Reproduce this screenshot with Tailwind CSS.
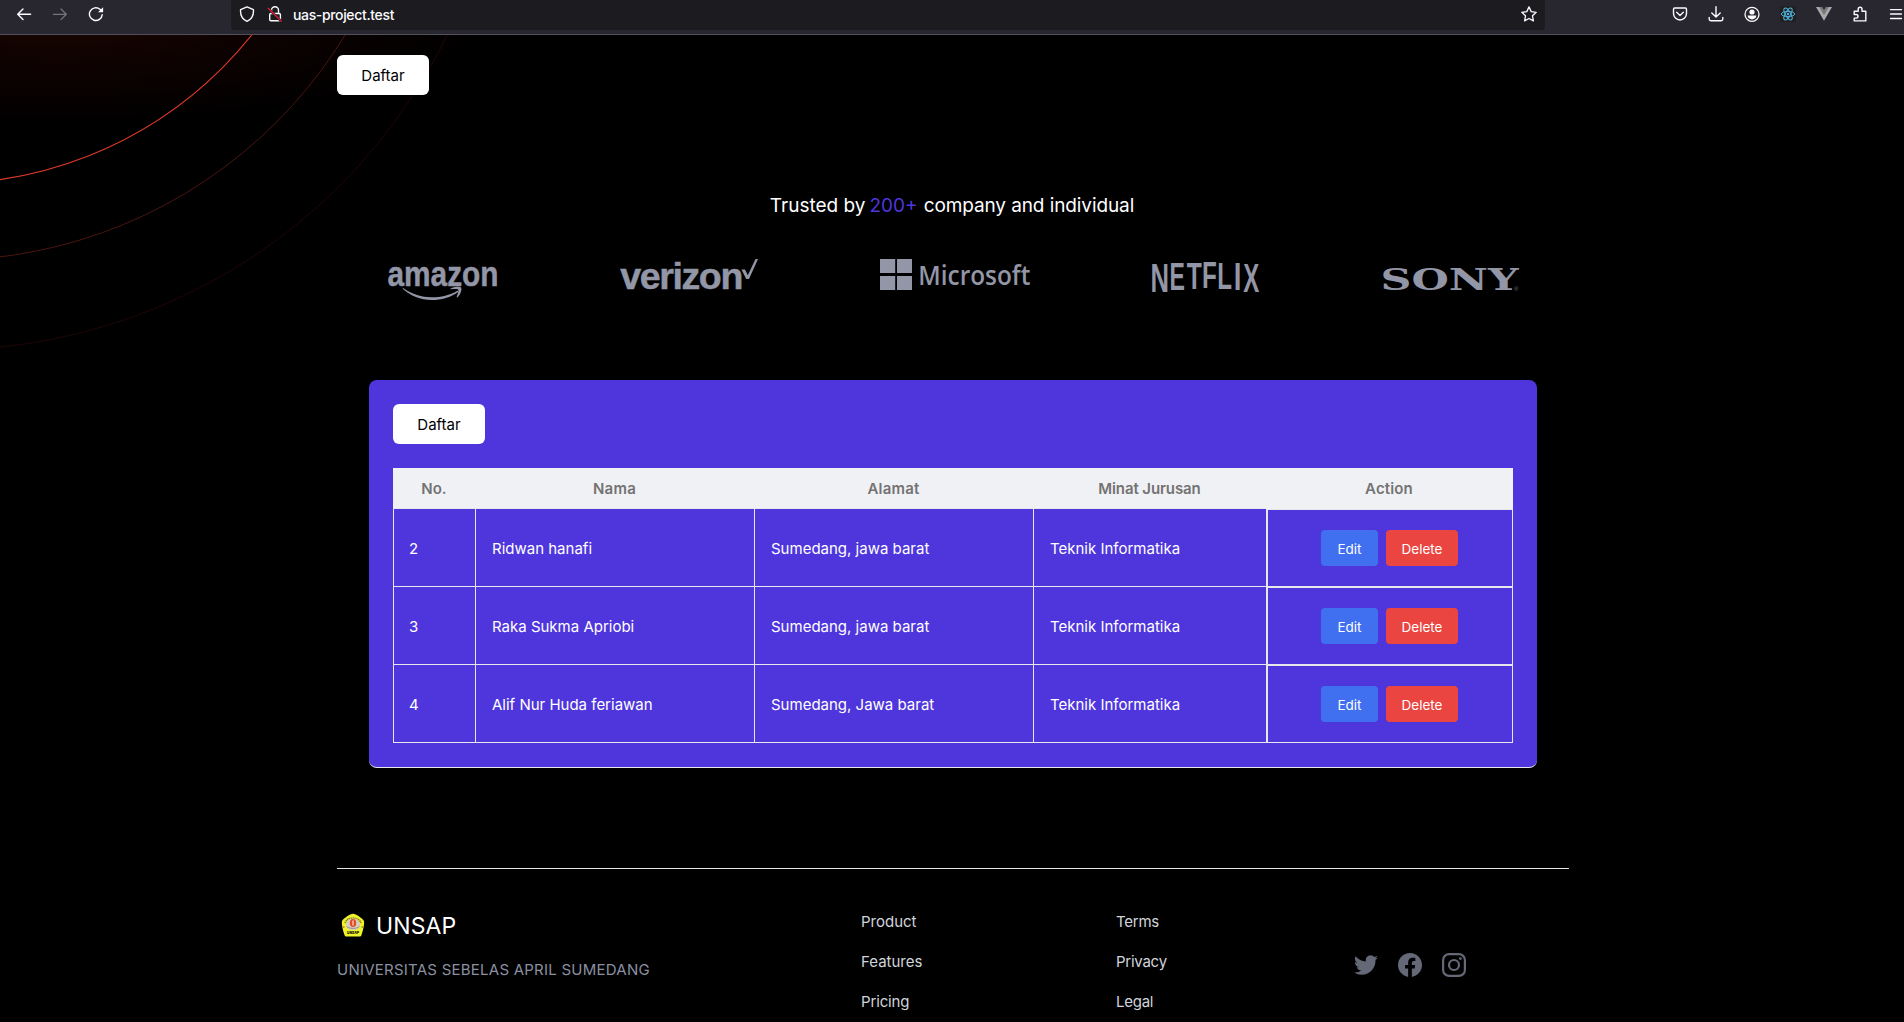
<!DOCTYPE html>
<html lang="id">
<head>
<meta charset="utf-8">
<title>uas-project.test</title>
<script src="https://cdn.jsdelivr.net/npm/@tailwindcss/browser@4"></script>
</head>
<body class="h-[1022px] overflow-hidden bg-black font-['Inter',sans-serif] text-[15px] leading-6 text-white">

<!-- Browser toolbar -->
<header class="relative z-10 flex h-[35px] items-start border-b border-[#52505e] bg-[#28262f] text-[#fbfbfe]">
  <div class="flex h-7 w-[231px] items-center gap-5 pl-4">
    <svg class="size-4" viewBox="0 0 16 16" fill="none" stroke="currentColor" stroke-width="1.4" stroke-linecap="round" stroke-linejoin="round"><path d="M14.6 8.3H1.8M7 3 1.7 8.3 7 13.6"/></svg>
    <svg class="size-4 text-[#75747c]" viewBox="0 0 16 16" fill="none" stroke="currentColor" stroke-width="1.3" stroke-linecap="round" stroke-linejoin="round"><path d="M1.4 8.3h12.8M9 3l5.3 5.3L9 13.6"/></svg>
    <svg class="size-4" viewBox="0 0 16 16" fill="none" stroke="currentColor" stroke-width="1.4" stroke-linecap="round"><path d="M14.2 8.6A6.4 6.4 0 1 1 12 3.3l1.6 1.6"/><path d="M15.1 1.3v5H10z" fill="currentColor" stroke="none"/></svg>
  </div>
  <div class="flex h-[30px] w-[1314px] items-center rounded-b bg-[#1c1b20] pb-[2px] pl-2 pr-2">
    <svg class="size-4" viewBox="0 0 16 16" fill="none" stroke="currentColor" stroke-width="1.4" stroke-linejoin="round"><path d="M8 .9 14.4 3.6c.5 5.4-1.7 9.6-6.4 11.7C3.3 13.2 1.1 9 1.6 3.600Z"/></svg>
    <svg class="ml-3 size-4" viewBox="0 0 16 16" fill="none" stroke="currentColor" stroke-width="1.4"><path d="M4.500 7.500V4.200a3.500 3.500 0 0 1 7 0v3.300"/><rect x="2.700" y="7.500" width="10.700" height="7.300" rx="1.200"/><path d="M1.300 2.300 14.500 15.600" stroke="#1c1b20" stroke-width="2.400"/><path d="M1 2 14.700 15.600" stroke="#e3203c" stroke-width="1.300"/></svg>
    <span class="ml-[10px] mt-[2px] text-[14px] font-medium tracking-[-0.35px]">uas-project.test</span>
    <svg class="ml-auto size-4" viewBox="0 0 16 16" fill="none" stroke="currentColor" stroke-width="1.300" stroke-linejoin="round"><path d="m8 .9 2.200 4.700 5 .7-3.700 3.500.9 5.100L8 12.500l-4.400 2.400.9-5.100L.8 6.300l5-.7Z"/></svg>
  </div>
  <div class="ml-auto flex h-7 items-center gap-5">
    <svg class="size-4" viewBox="0 0 16 16" fill="none" stroke="currentColor" stroke-width="1.400" stroke-linecap="round" stroke-linejoin="round"><path d="M2.700 2h10.600c.7 0 1.200.5 1.200 1.200V7.500a6.500 6.500 0 0 1-13 0V3.200C1.500 2.500 2 2 2.700 2ZM4.700 6.300 8 9.400l3.300-3.100"/></svg>
    <svg class="size-4" viewBox="0 0 16 16" fill="none" stroke="currentColor" stroke-width="1.400" stroke-linecap="round" stroke-linejoin="round"><path d="M8 .8v10M3.800 7 8 11l4.200-4M1.200 11.500v1.600c0 1 .7 1.700 1.700 1.700h10.200c1 0 1.700-.7 1.700-1.700v-1.600"/></svg>
    <svg class="size-4" viewBox="0 0 16 16" fill="none" stroke="currentColor" stroke-width="1.300"><circle cx="8" cy="8.300" r="7"/><circle cx="8" cy="6" r="2.600" fill="currentColor" stroke="none"/><path d="M3.600 9.500h8.800c0 2.200-2 3.900-4.400 3.900s-4.400-1.700-4.400-3.900Z" fill="currentColor" stroke="none"/></svg>
    <svg class="size-4" viewBox="0 0 16 16" fill="none" stroke="#4fb4e0" stroke-width="1"><rect width="16" height="16" fill="#20201f" stroke="none"/><circle cx="8" cy="8" r="1.200" fill="#4fb4e0" stroke="none"/><ellipse cx="8" cy="8" rx="6.700" ry="2.600"/><ellipse cx="8" cy="8" rx="6.700" ry="2.600" transform="rotate(60 8 8)"/><ellipse cx="8" cy="8" rx="6.700" ry="2.600" transform="rotate(120 8 8)"/></svg>
    <svg class="size-4" viewBox="0 0 16 16"><path d="M0 1h6l2 3.600L10 1h6L8 14.800Z" fill="#a9a9a9"/><path d="M3.200 1H6l2 3.600L10 1h2.800L8 9.300Z" fill="#777"/></svg>
    <svg class="size-4" viewBox="0 0 16 16" fill="none" stroke="currentColor" stroke-width="1.400" stroke-linejoin="round"><path d="M2.200 14.900h11.600V5.200H10V3.200a1.900 1.900 0 0 0-3.800 0v2h-4v3.300h2a1.800 1.800 0 0 1 0 3.600h-2Z"/></svg>
    <svg class="size-4" viewBox="0 0 16 16" fill="none" stroke="currentColor" stroke-width="1.300" stroke-linecap="round"><path d="M2.500 3.700h11M2.500 8h11M2.500 12.500h11"/></svg>
  </div>
</header>

<!-- Decorative glow and rings -->
<svg class="pointer-events-none absolute left-0 top-[35px] z-0" width="600" height="345" viewBox="0 35 600 345" fill="none">
  <defs>
    <radialGradient id="glow" gradientUnits="userSpaceOnUse" cx="0" cy="0" r="1" gradientTransform="translate(60 20) scale(440 105)"><stop offset="0" stop-color="#1a0502"/><stop offset=".45" stop-color="#0d0201"/><stop offset="1" stop-color="#000"/></radialGradient>
  </defs>
  <rect x="0" y="35" width="600" height="120" fill="url(#glow)"/>
  <circle cx="-57" cy="-211" r="394.700" stroke="#e03a2a" stroke-width="1.100"/>
  <circle cx="-57" cy="-211" r="471.400" stroke="#4a1510" stroke-width="1"/>
  <circle cx="-57" cy="-211" r="561" stroke="#1f0606" stroke-width="1"/>
</svg>

<div class="relative mx-auto w-[1232px] translate-x-px">
  <nav class="flex pt-5">
    <a class="flex h-10 w-[92px] items-center justify-center rounded-md bg-white pt-[2px] text-black">Daftar</a>
  </nav>

  <!-- Trusted brands -->
  <section class="pt-[96px]">
    <h2 class="flex h-7 items-center justify-center whitespace-nowrap pr-[2px] pt-[2px] text-[19px]"><span>Trusted by</span><span class="ml-1 mr-[6px]  text-[#4f36dc]">200+</span><span class="tracking-[-0.1px]">company and individual</span></h2>
    <div class="mt-[35px] flex h-12 justify-between pl-[50px] pr-[50.5px] text-[#9296a6]">
      <svg class="overflow-visible" width="112" height="48" viewBox="387 254 112 48" fill="currentColor">
        <text x="387.500" y="285.700" font-family="Liberation Sans" font-weight="700" font-size="35" textLength="111" lengthAdjust="spacingAndGlyphs" stroke="currentColor" stroke-width=".5">amazon</text>
        <path d="M403.500 288.200c9 6.300 18 9 28 9 9.500 0 18.500-2.200 25.500-6.300 1-.5 1.800.5.800 1.300-6.800 5.100-16.300 7.800-26 7.800-11.500 0-21.300-4.300-28.800-11-.6-.6 0-1.200.5-.8Z"/><path d="M450.500 288.700c3-2 8.300-2.200 10.300-1.500 1.500.8.300 7-3.200 10.100-.6.500-1.100.2-.9-.5.900-2.200 2.200-6.300 1.400-7.300-.9-.9-5-.5-7.300-.2-.6.100-.8-.3-.3-.6Z"/>
      </svg>
      <svg class="overflow-visible" width="139" height="48" viewBox="620 254 139 48" fill="currentColor">
        <text x="620.300" y="288.700" font-family="Liberation Sans" font-weight="700" font-size="37.500" textLength="123" lengthAdjust="spacing" stroke="currentColor" stroke-width=".5">verizon</text>
        <path d="M741.500 269.500h3.500l2.800 5.800L755.500 259h2.500l-9 20h-2.800Z"/>
      </svg>
      <svg class="overflow-visible" width="151" height="48" viewBox="880 254 151 48" fill="currentColor">
        <path d="M880 259h15.200v14H880zM897 259h15v14h-15zM880 276h15.200v14H880zM897 276h15v14h-15z"/>
        <text x="918.300" y="285" font-family="Open Sans" font-weight="600" font-size="27.500" textLength="112" lengthAdjust="spacingAndGlyphs">Microsoft</text>
      </svg>
      <svg class="overflow-visible" width="108" height="48" viewBox="1151.500 254 108 48" fill="currentColor" font-family="Liberation Sans" font-weight="700" font-size="30" role="img" aria-label="NETFLIX">
        <text transform="translate(1150.100 291.500) scale(.855 1.383)">N</text>
        <text transform="translate(1169 290) scale(.77 1.310)">E</text>
        <text transform="translate(1186.200 288.500) scale(.82 1.238)">T</text>
        <text transform="translate(1201.500 288.300) scale(.81 1.228)">F</text>
        <text transform="translate(1216.850 289) scale(.805 1.262)">L</text>
        <text transform="translate(1233.150 289.800) scale(.92 1.300)">I</text>
        <text transform="translate(1242.700 291.500) scale(.8 1.383)">X</text>
      </svg>
      <svg class="overflow-visible" width="137" height="48" viewBox="1381.500 254 137 48" fill="currentColor">
        <text x="1380" y="290" font-family="DejaVu Serif" font-weight="700" font-size="30" textLength="138" lengthAdjust="spacingAndGlyphs">SONY</text>
        <text x="1513.500" y="291" font-family="Liberation Sans" font-size="6" fill="#6b6e7a">®</text>
      </svg>
    </div>
  </section>

  <!-- Registrants -->
  <section class="mx-8 mt-[78px] h-[388px] w-[1168px] rounded-lg border-b border-gray-200 bg-[#4f36dc] p-6">
    <a class="flex h-10 w-[92px] items-center justify-center rounded-md bg-white pt-[2px] text-black">Daftar</a>
    <table class="mt-6 w-[1120px] table-fixed border-separate border-spacing-0 text-left">
      <colgroup><col class="w-[82px]"><col class="w-[279px]"><col class="w-[279px]"><col class="w-[233px]"><col class="w-[247px]"></colgroup>
      <thead class="bg-[#f0f1f5] text-center text-[#737373]">
        <tr class="h-[41px]">
          <th class="border-b border-gray-200 p-0 pt-[2px] font-semibold">No.</th>
          <th class="border-b border-gray-200 p-0 pt-[2px] font-semibold tracking-[0.200px]">Nama</th>
          <th class="border-b border-gray-200 p-0 pt-[2px] font-semibold tracking-[0.200px]">Alamat</th>
          <th class="border-b border-gray-200 p-0 pt-[2px] font-semibold tracking-[-0.100px]">Minat Jurusan</th>
          <th class="border-b border-[#f0f1f5] p-0 pr-px pt-[2px] font-semibold tracking-[0.150px]">Action</th>
        </tr>
      </thead>
      <tbody id="rows"></tbody>
    </table>
  </section>

  <!-- Footer -->
  <footer class="mt-[100px] border-t border-[#e5e7eb]">
    <div class="flex h-[153px] pt-[41px]">
      <div class="w-[524px]">
        <div class="flex h-8 items-center">
          <svg class="-mt-[2px] ml-[4px] size-6" viewBox="0 0 24 24"><path d="M12 .8C15 1 21 5 23 8c.6 3-1 10-2.500 14-.3 1-1 1.500-2 1.500H5.500c-1 0-1.700-.5-2-1.500C2 18 .4 11 1 8 3 5 9 1 12 .8Z" fill="#f0f22a"/><path d="M4 10C6 3.500 18 3.500 20 10" fill="none" stroke="#77791d" stroke-width="1.500" stroke-dasharray="1.300 .6"/><path d="M12 5.500c5 0 7 3.500 7 6.500s-3 5-7 5-7-2-7-5 2-6.500 7-6.500Z" fill="#d5cdc0"/><path d="M5.500 13.500C8 16 16 16 18.500 13.500" fill="none" stroke="#9a9488"/><ellipse cx="12" cy="10" rx="3.200" ry="4" fill="#e5482a"/><path d="M12 7.500v5" stroke="#f7d0a0" stroke-width="1.400"/><circle cx="2.800" cy="14" r=".8" fill="#8a6a1a"/><circle cx="21.200" cy="14" r=".8" fill="#8a6a1a"/><text x="6" y="21" font-family="Inter" font-weight="900" font-size="4" textLength="12" lengthAdjust="spacingAndGlyphs" fill="#151500">UNSAP</text></svg>
          <span class="ml-[11px] text-[23px] tracking-[0.100px]">UNSAP</span>
        </div>
        <p class="mt-4 tracking-[0.240px] text-[#8b90a0]">UNIVERSITAS SEBELAS APRIL SUMEDANG</p>
      </div>
      <ul class="w-[255px] space-y-4 text-[#d1d5db]"><li>Product</li><li>Features</li><li class="tracking-[-0.150px]">Pricing</li></ul>
      <ul class="w-[238px] space-y-4 tracking-[-0.250px] text-[#d1d5db]"><li>Terms</li><li>Privacy</li><li>Legal</li></ul>
      <div class="flex gap-5 pt-[43px] text-[#646877]">
        <svg class="size-6" viewBox="0 0 24 24" fill="currentColor"><path d="M24 4.600a9.900 9.900 0 0 1-2.800.8 4.900 4.900 0 0 0 2.200-2.700 9.900 9.900 0 0 1-3.100 1.200 4.900 4.900 0 0 0-8.400 4.500A14 14 0 0 1 1.700 3.200a4.900 4.900 0 0 0 1.500 6.500 4.900 4.900 0 0 1-2.200-.6v.1a4.900 4.900 0 0 0 3.900 4.800 4.900 4.900 0 0 1-2.200.1 4.900 4.900 0 0 0 4.600 3.400A9.900 9.900 0 0 1 0 19.500a14 14 0 0 0 7.500 2.200c9.100 0 14-7.500 14-14v-.6A10 10 0 0 0 24 4.600Z"/></svg>
        <svg class="size-6" viewBox="0 0 24 24" fill="currentColor"><path d="M24 12.073C24 5.446 18.627.073 12 .073S0 5.446 0 12.073c0 5.990 4.388 10.954 10.125 11.854v-8.385H7.078v-3.470h3.047V9.430c0-3.007 1.792-4.669 4.533-4.669 1.312 0 2.686.235 2.686.235v2.953H15.830c-1.491 0-1.956.925-1.956 1.874v2.250h3.328l-.532 3.470h-2.796v8.385C19.612 23.027 24 18.062 24 12.073Z"/></svg>
        <svg class="size-6" viewBox="0 0 24 24" fill="none" stroke="currentColor" stroke-width="2.200"><rect x="1.100" y="1.100" width="21.800" height="21.800" rx="6"/><circle cx="12" cy="12" r="5"/><circle cx="18.400" cy="5.600" r="1.440" fill="currentColor" stroke="none"/></svg>
      </div>
    </div>
  </footer>
</div>

<script>
const rows = [
  [2, 'Ridwan hanafi', 'Sumedang, jawa barat', 'Teknik Informatika'],
  [3, 'Raka Sukma Apriobi', 'Sumedang, jawa barat', 'Teknik Informatika'],
  [4, 'Alif Nur Huda feriawan', 'Sumedang, Jawa barat', 'Teknik Informatika'],
];
document.getElementById('rows').innerHTML = rows.map(r => `<tr class="h-[78px]">${
  r.map((v, i) => `<td class="${i ? 'pl-4' : 'pl-[15px]'} h-[78px] border-b border-l border-gray-200 pb-0 pt-[2px]">${v}</td>`).join('')
}<td class="h-[78px] border-y border-l-2 border-r border-gray-200 p-0"><div class="flex items-center justify-center gap-2 pr-px text-[13.5px]"><a class="flex h-9 w-[57px] items-center justify-center rounded bg-[#4070f0] pt-px">Edit</a><a class="flex h-9 w-[72px] items-center justify-center rounded bg-[#ea4540] pt-px">Delete</a></div></td></tr>`).join('');
</script>
</body>
</html>
